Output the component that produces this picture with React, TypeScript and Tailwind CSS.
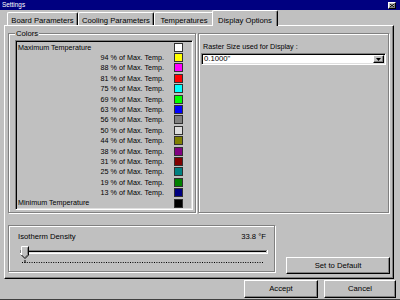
import React from 'react';

const colorRows = [
  { label: 'Maximum Temperature', color: '#ffffff', edge: true },
  { label: '94 % of Max. Temp.', color: '#ffff00' },
  { label: '88 % of Max. Temp.', color: '#ff00ff' },
  { label: '81 % of Max. Temp.', color: '#ff0000' },
  { label: '75 % of Max. Temp.', color: '#00ffff' },
  { label: '69 % of Max. Temp.', color: '#00ff00' },
  { label: '63 % of Max. Temp.', color: '#0000ff' },
  { label: '56 % of Max. Temp.', color: '#808080' },
  { label: '50 % of Max. Temp.', color: '#dcdcdc' },
  { label: '44 % of Max. Temp.', color: '#808000' },
  { label: '38 % of Max. Temp.', color: '#800080' },
  { label: '31 % of Max. Temp.', color: '#800000' },
  { label: '25 % of Max. Temp.', color: '#008080' },
  { label: '19 % of Max. Temp.', color: '#008000' },
  { label: '13 % of Max. Temp.', color: '#000080' },
  { label: 'Minimum Temperature', color: '#000000', edge: true },
];

const raised = 'border border-t-white border-l-white border-r-black border-b-black shadow-[inset_-1px_-1px_0_#808080]';
const sunken = 'border border-t-[#808080] border-l-[#808080] border-b-white border-r-white shadow-[inset_1px_1px_0_#000,inset_-1px_-1px_0_#dfdfdf]';
const etched = 'border border-[#808080] shadow-[1px_1px_0_#fff,inset_1px_1px_0_#fff]';

const Tab = ({ label, width, active }: { label: string; width: string; active?: boolean }) => (
  <div
    className={`${width} flex justify-center bg-[#c0c0c0] border-l border-t border-r border-l-white border-t-white border-r-black rounded-t-[2px] shadow-[inset_-1px_0_0_#808080] ${
      active ? 'h-[16px] -mb-[1px] -ml-[2px] pt-[6px] relative z-10' : 'h-[13px] pt-[4px]'
    }`}
  >
    {label}
  </div>
);

export default function App() {
  return (
    <div className="w-[400px] h-[300px] bg-[#c0c0c0] flex flex-col overflow-hidden border-b border-[#404040] font-['Liberation_Sans',Arial,sans-serif] text-[7.7px] leading-none text-black">
      {/* title bar */}
      <div className="h-[10px] bg-[#000080] flex items-center justify-between pl-[2px] pr-[4px]">
        <span className="text-white text-[6.4px]">Settings</span>
        <div className={`w-[8px] h-[7px] bg-[#c0c0c0] ${raised} flex items-center justify-center`}>
          <svg width="4" height="3" viewBox="0 0 4 3">
            <path d="M0 0L4 3M4 0L0 3" stroke="#000" strokeWidth="1" />
          </svg>
        </div>
      </div>

      {/* tabs */}
      <div className="h-[15px] flex items-end pl-[7px]">
        <Tab label="Board Parameters" width="w-[71px]" />
        <Tab label="Cooling Parameters" width="w-[76px]" />
        <Tab label="Temperatures" width="w-[60px]" />
        <Tab label="Display Options" width="w-[66px]" active />
      </div>

      {/* tab panel */}
      <div className={`ml-[4px] w-[390px] h-[254px] shrink-0 ${raised} flex flex-col`}>
        <div className="flex mt-[7px]">
          {/* colors group */}
          <div className={`relative ml-[3px] w-[188px] h-[180px] ${etched}`}>
            <span className="absolute left-[6px] -top-[4.5px] px-[1px] bg-[#c0c0c0]">Colors</span>
            <div className={`ml-[6px] mt-[6px] w-[178px] ${sunken} p-[1px] text-[7.2px]`}>
              {colorRows.map((r) => (
                <div key={r.label} className="h-[10.4px] flex items-center">
                  <span className={`flex-1 ${r.edge ? 'text-left pl-[1px]' : 'text-right'}`}>{r.label}</span>
                  <span
                    className="w-[9px] h-[9px] ml-[10px] mr-[8px] border border-[#303030]"
                    style={{ backgroundColor: r.color }}
                  />
                </div>
              ))}
            </div>
          </div>

          {/* raster group */}
          <div className={`ml-[2px] w-[191px] h-[180px] ${etched} flex flex-col`}>
            <span className="ml-[4px] mt-[9px] text-[7.2px]">Raster Size used for Display :</span>
            <div className={`ml-[2px] mt-[3px] w-[185px] h-[12px] bg-white ${sunken} p-[1px] flex items-center`}>
              <span className="flex-1 pl-[1px]">0.1000"</span>
              <div className={`w-[11px] h-full bg-[#c0c0c0] ${raised} flex items-center justify-center`}>
                <svg width="5" height="3" viewBox="0 0 5 3">
                  <path d="M0 0H5L2.5 3Z" fill="#000" />
                </svg>
              </div>
            </div>
          </div>
        </div>

        <div className="flex items-start mt-[12px]">
          {/* isotherm group */}
          <div className={`ml-[3px] w-[267px] h-[47px] ${etched} flex flex-col`}>
            <div className="ml-[9px] mr-[8px] mt-[7px] flex justify-between">
              <span>Isotherm Density</span>
              <span>33.8 °F</span>
            </div>
            <svg className="ml-[9px] mt-[4px]" width="250" height="20" viewBox="0 0 250 20">
              <rect x="2" y="5" width="247" height="1" fill="#808080" />
              <rect x="2" y="5" width="1" height="4" fill="#808080" />
              <rect x="3" y="6" width="245" height="1" fill="#000" />
              <rect x="3" y="7" width="245" height="1" fill="#dfdfdf" />
              <rect x="2" y="8" width="248" height="1" fill="#fff" />
              <rect x="249" y="5" width="1" height="4" fill="#fff" />
              <polygon points="3.5,1.5 10.5,1.5 10.5,10 7,13.5 3.5,10" fill="#c0c0c0" />
              <polyline points="3.5,10 3.5,1.5 10.5,1.5" fill="none" stroke="#fff" strokeWidth="1" />
              <polyline points="9.5,2.5 9.5,9.6 7,12.2" fill="none" stroke="#808080" strokeWidth="1" />
              <polyline points="10.5,1.5 10.5,10 7,13.5 3.5,10" fill="none" stroke="#000" strokeWidth="1" />
              <line x1="7" y1="15" x2="7" y2="18" stroke="#000" strokeWidth="1" />
              <line x1="4" y1="17.5" x2="246" y2="17.5" stroke="#000" strokeWidth="1" strokeDasharray="1 1.4" />
            </svg>
          </div>

          <button className={`ml-[11px] mt-[32px] w-[104px] h-[17px] bg-[#c0c0c0] ${raised} flex items-center justify-center`}>
            Set to Default
          </button>
        </div>
      </div>

      {/* dialog buttons */}
      <div className="flex justify-end gap-[6px] pr-[4px] mt-[1px]">
        <button className={`w-[74px] h-[18px] bg-[#c0c0c0] ${raised} flex items-center justify-center`}>Accept</button>
        <button className={`w-[72px] h-[18px] bg-[#c0c0c0] ${raised} flex items-center justify-center`}>Cancel</button>
      </div>
    </div>
  );
}
